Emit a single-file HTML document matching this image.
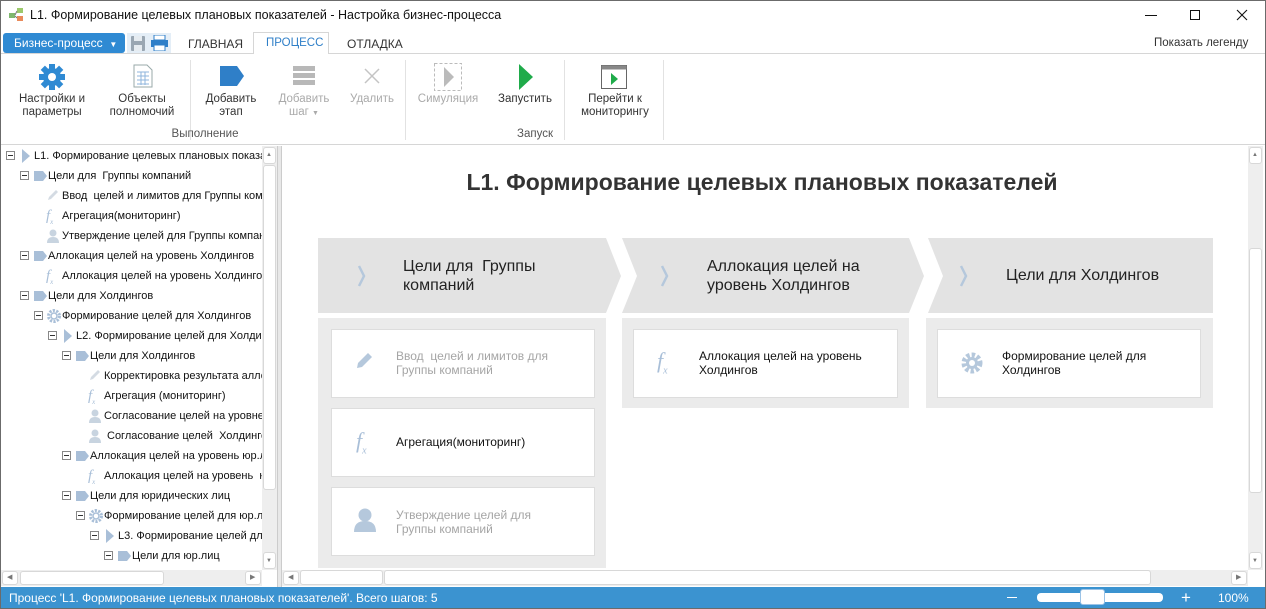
<!DOCTYPE html>
<html><head><meta charset="utf-8">
<style>
*{margin:0;padding:0;box-sizing:border-box}
body{width:1266px;height:609px;overflow:hidden;background:#fff;font-family:"Liberation Sans","DejaVu Sans",sans-serif;font-size:12px;color:#222;position:relative}
.a{position:absolute;white-space:nowrap}
.win{position:absolute;left:0;top:0;width:1266px;height:609px;border:1px solid #6b6b6b}
.rb{position:absolute;text-align:center;font-size:11.5px;line-height:13px;color:#333}
.dis{color:#aaa}
.sep{position:absolute;top:60px;width:1px;height:80px;background:#e2e2e2}
.tr{position:absolute;height:20px;line-height:20px;font-size:11px;white-space:nowrap;color:#111}
.bx{position:absolute;width:9px;height:9px;border:1px solid #888;background:#fff;top:5px}
.bx:after{content:"";position:absolute;left:1px;top:3px;width:5px;height:1px;background:#333}
.ic{position:absolute;top:2px}
.card{position:absolute;background:#fff;border:1px solid #ddd}
.ct{position:absolute;font-size:12px;line-height:14px}
.hd{position:absolute;font-size:16px;line-height:19px;color:#222}
.pan{position:absolute;background:#ebebeb}
.sb{position:absolute;background:#fff;border:1px solid #d8d8d8;border-radius:3px}
</style></head><body>
<div class="win"></div>
<svg class="a" style="left:9px;top:8px" width="16" height="14"><rect x="0" y="5" width="6" height="5" fill="#7fb86e"/><rect x="8" y="0" width="6" height="5" fill="#9cc96b"/><rect x="8" y="8" width="6" height="5" fill="#e98a5a"/><path d="M6 7 L8 3 M6 8 L8 10" stroke="#777"/></svg>
<div class="a" style="left:30px;top:8px;font-size:12.5px;color:#111">L1. Формирование целевых плановых показателей - Настройка бизнес-процесса</div>
<div class="a" style="left:1145px;top:15px;width:12px;height:1px;background:#111"></div>
<div class="a" style="left:1190px;top:10px;width:10px;height:10px;border:1px solid #111"></div>
<svg class="a" style="left:1236px;top:9px" width="12" height="12"><path d="M1 1L11 11M11 1L1 11" stroke="#111" stroke-width="1.1"/></svg>
<div class="a" style="left:3px;top:33px;width:122px;height:20px;background:#2f8ad3;border-radius:3px;color:#fff;font-size:12px;line-height:20px;padding-left:11px">Бизнес-процесс&nbsp;&nbsp;<span style="font-size:8px">▼</span></div>
<div class="a" style="left:127px;top:33px;width:44px;height:20px;background:#e4eef7"></div>
<svg class="a" style="left:131px;top:36px" width="14" height="15"><rect x="0" y="0" width="14" height="15" fill="#9aa7b3" rx="1"/><rect x="3" y="0" width="8" height="5" fill="#e6ecf1"/><rect x="3" y="9" width="8" height="6" fill="#e6ecf1"/></svg>
<svg class="a" style="left:151px;top:35px" width="17" height="16"><rect x="3" y="0" width="11" height="5" fill="#fff" stroke="#2f7fc8"/><rect x="0" y="5" width="17" height="7" fill="#2f7fc8"/><rect x="3" y="10" width="11" height="6" fill="#fff" stroke="#2f7fc8"/></svg>
<div class="a" style="left:188px;top:37px;font-size:12px;color:#333">ГЛАВНАЯ</div>
<div class="a" style="left:253px;top:32px;width:76px;height:22px;border:1px solid #d6d6d6;border-bottom:none;background:#fff"></div>
<div class="a" style="left:266px;top:37px;font-size:11.5px;color:#2f7fc8">ПРОЦЕСС</div>
<div class="a" style="left:347px;top:37px;font-size:12px;color:#333">ОТЛАДКА</div>
<div class="a" style="left:1154px;top:37px;font-size:11.5px;color:#333">Показать легенду</div>
<div class="a" style="left:1px;top:53px;width:252px;height:1px;background:#d6d6d6"></div>
<div class="a" style="left:329px;top:53px;width:936px;height:1px;background:#d6d6d6"></div>
<svg class="a" style="left:38px;top:63px" width="28" height="28" viewBox="0 0 28 28"><g fill="#2f8ad3"><circle cx="14" cy="14" r="9"/><rect x="11" y="1" width="6" height="6"/><rect x="11" y="21" width="6" height="6"/><rect x="1" y="11" width="6" height="6"/><rect x="21" y="11" width="6" height="6"/><g transform="rotate(45 14 14)"><rect x="11" y="1" width="6" height="6"/><rect x="11" y="21" width="6" height="6"/><rect x="1" y="11" width="6" height="6"/><rect x="21" y="11" width="6" height="6"/></g></g><circle cx="14" cy="14" r="4" fill="#fff"/></svg>
<svg class="a" style="left:133px;top:64px" width="20" height="24"><path d="M1 1H14L19 6V23H1Z" fill="#fff" stroke="#9aa"/><g stroke="#8fb6dc"><path d="M4 8H16M4 12H16M4 16H16M4 20H16M8 8V21M12 8V21"/></g></svg>
<svg class="a" style="left:220px;top:66px" width="24" height="20"><path d="M0 0H17L24 10L17 20H0Z" fill="#2f7fc8"/></svg>
<svg class="a" style="left:293px;top:66px" width="22" height="20"><g fill="#b8b8b8"><rect y="0" width="22" height="5"/><rect y="7" width="22" height="5"/><rect y="14" width="22" height="5"/></g></svg>
<svg class="a" style="left:363px;top:67px" width="18" height="18"><path d="M2 2L16 16M16 2L2 16" stroke="#c4c4c4" stroke-width="1.5"/></svg>
<svg class="a" style="left:434px;top:63px" width="28" height="28"><rect x="0.5" y="0.5" width="27" height="27" fill="none" stroke="#bbb" stroke-dasharray="3 2"/><path d="M10 4L20 14L10 24Z" fill="#bbb"/></svg>
<svg class="a" style="left:518px;top:64px" width="16" height="26"><path d="M1 0L15 13L1 26Z" fill="#1fab4a"/></svg>
<svg class="a" style="left:601px;top:65px" width="26" height="24"><rect x="0.5" y="0.5" width="25" height="23" fill="#fff" stroke="#666"/><rect x="0.5" y="0.5" width="25" height="4" fill="#888"/><path d="M10 8L17 14L10 20Z" fill="#1fab4a"/></svg>
<div class="rb" style="left:12px;top:93px;width:80px">Настройки и<br>параметры</div>
<div class="rb" style="left:102px;top:93px;width:80px">Объекты<br>полномочий</div>
<div class="sep" style="left:190px"></div>
<div class="rb" style="left:197px;top:93px;width:68px">Добавить<br>этап</div>
<div class="rb dis" style="left:270px;top:93px;width:68px">Добавить<br>шаг <span style="font-size:7px">▼</span></div>
<div class="rb dis" style="left:340px;top:93px;width:64px">Удалить</div>
<div class="rb" style="left:150px;top:128px;width:110px;color:#555">Выполнение</div>
<div class="sep" style="left:405px"></div>
<div class="rb dis" style="left:410px;top:93px;width:76px">Симуляция</div>
<div class="rb" style="left:490px;top:93px;width:70px">Запустить</div>
<div class="sep" style="left:564px"></div>
<div class="rb" style="left:568px;top:93px;width:94px">Перейти к<br>мониторингу</div>
<div class="rb" style="left:490px;top:128px;width:90px;color:#555">Запуск</div>
<div class="sep" style="left:663px"></div>
<div class="a" style="left:1px;top:144px;width:1264px;height:1px;background:#d6d6d6"></div>

<div style="position:absolute;left:1px;top:146px;width:261px;height:424px;overflow:hidden">
<div class="tr" style="top:0"><div class="bx" style="left:5px"></div><svg class="ic" style="left:19px" width="12" height="16"><path d="M2 1L10 8L2 15Z" fill="#a9bfd8"/></svg><span class="a" style="left:33px">L1. Формирование целевых плановых показателей</span></div>
<div class="tr" style="top:20px"><div class="bx" style="left:19px"></div><svg class="ic" style="left:33px;top:5px" width="14" height="10"><path d="M0 0H9L13 5L9 10H0Z" fill="#a9bfd8"/></svg><span class="a" style="left:47px">Цели для&nbsp; Группы компаний</span></div>
<div class="tr" style="top:40px"><svg class="ic" style="left:45px" width="14" height="14"><path d="M2 12L3 9L10 2L12 4L5 11Z" fill="#d4dbe3"/></svg><span class="a" style="left:61px">Ввод&nbsp; целей и лимитов для Группы компаний</span></div>
<div class="tr" style="top:60px"><span class="a" style="left:45px;font-family:'Liberation Serif',serif;font-style:italic;color:#a9bfd8;font-size:15px">f<sub style="font-size:7px">x</sub></span><span class="a" style="left:61px">Агрегация(мониторинг)</span></div>
<div class="tr" style="top:80px"><svg class="ic" style="left:45px" width="14" height="16"><circle cx="7" cy="5" r="3.5" fill="#c8d4e0"/><path d="M1 15Q1 9 7 9Q13 9 13 15Z" fill="#c8d4e0"/></svg><span class="a" style="left:61px">Утверждение целей для Группы компаний</span></div>
<div class="tr" style="top:100px"><div class="bx" style="left:19px"></div><svg class="ic" style="left:33px;top:5px" width="14" height="10"><path d="M0 0H9L13 5L9 10H0Z" fill="#a9bfd8"/></svg><span class="a" style="left:47px">Аллокация целей на уровень Холдингов</span></div>
<div class="tr" style="top:120px"><span class="a" style="left:45px;font-family:'Liberation Serif',serif;font-style:italic;color:#a9bfd8;font-size:15px">f<sub style="font-size:7px">x</sub></span><span class="a" style="left:61px">Аллокация целей на уровень Холдингов</span></div>
<div class="tr" style="top:140px"><div class="bx" style="left:19px"></div><svg class="ic" style="left:33px;top:5px" width="14" height="10"><path d="M0 0H9L13 5L9 10H0Z" fill="#a9bfd8"/></svg><span class="a" style="left:47px">Цели для Холдингов</span></div>
<div class="tr" style="top:160px"><div class="bx" style="left:33px"></div><svg class="ic" style="left:45px" width="16" height="16"><circle cx="8" cy="8" r="5.5" fill="none" stroke="#a9bfd8" stroke-width="3" stroke-dasharray="2.2 1.3"/><circle cx="8" cy="8" r="3" fill="none" stroke="#a9bfd8" stroke-width="1.5"/></svg><span class="a" style="left:61px">Формирование целей для Холдингов</span></div>
<div class="tr" style="top:180px"><div class="bx" style="left:47px"></div><svg class="ic" style="left:61px" width="12" height="16"><path d="M2 1L10 8L2 15Z" fill="#a9bfd8"/></svg><span class="a" style="left:75px">L2. Формирование целей для Холдингов</span></div>
<div class="tr" style="top:200px"><div class="bx" style="left:61px"></div><svg class="ic" style="left:75px;top:5px" width="14" height="10"><path d="M0 0H9L13 5L9 10H0Z" fill="#a9bfd8"/></svg><span class="a" style="left:89px">Цели для Холдингов</span></div>
<div class="tr" style="top:220px"><svg class="ic" style="left:87px" width="14" height="14"><path d="M2 12L3 9L10 2L12 4L5 11Z" fill="#d4dbe3"/></svg><span class="a" style="left:103px">Корректировка результата аллокации</span></div>
<div class="tr" style="top:240px"><span class="a" style="left:87px;font-family:'Liberation Serif',serif;font-style:italic;color:#a9bfd8;font-size:15px">f<sub style="font-size:7px">x</sub></span><span class="a" style="left:103px">Агрегация (мониторинг)</span></div>
<div class="tr" style="top:260px"><svg class="ic" style="left:87px" width="14" height="16"><circle cx="7" cy="5" r="3.5" fill="#c8d4e0"/><path d="M1 15Q1 9 7 9Q13 9 13 15Z" fill="#c8d4e0"/></svg><span class="a" style="left:103px">Согласование целей на уровне Холдингов</span></div>
<div class="tr" style="top:280px"><svg class="ic" style="left:87px" width="14" height="16"><circle cx="7" cy="5" r="3.5" fill="#c8d4e0"/><path d="M1 15Q1 9 7 9Q13 9 13 15Z" fill="#c8d4e0"/></svg><span class="a" style="left:106px">Согласование целей&nbsp; Холдингов</span></div>
<div class="tr" style="top:300px"><div class="bx" style="left:61px"></div><svg class="ic" style="left:75px;top:5px" width="14" height="10"><path d="M0 0H9L13 5L9 10H0Z" fill="#a9bfd8"/></svg><span class="a" style="left:89px">Аллокация целей на уровень юр.лиц</span></div>
<div class="tr" style="top:320px"><span class="a" style="left:87px;font-family:'Liberation Serif',serif;font-style:italic;color:#a9bfd8;font-size:15px">f<sub style="font-size:7px">x</sub></span><span class="a" style="left:103px">Аллокация целей на уровень&nbsp; юр.лиц</span></div>
<div class="tr" style="top:340px"><div class="bx" style="left:61px"></div><svg class="ic" style="left:75px;top:5px" width="14" height="10"><path d="M0 0H9L13 5L9 10H0Z" fill="#a9bfd8"/></svg><span class="a" style="left:89px">Цели для юридических лиц</span></div>
<div class="tr" style="top:360px"><div class="bx" style="left:75px"></div><svg class="ic" style="left:87px" width="16" height="16"><circle cx="8" cy="8" r="5.5" fill="none" stroke="#a9bfd8" stroke-width="3" stroke-dasharray="2.2 1.3"/><circle cx="8" cy="8" r="3" fill="none" stroke="#a9bfd8" stroke-width="1.5"/></svg><span class="a" style="left:103px">Формирование целей для юр.лиц</span></div>
<div class="tr" style="top:380px"><div class="bx" style="left:89px"></div><svg class="ic" style="left:103px" width="12" height="16"><path d="M2 1L10 8L2 15Z" fill="#a9bfd8"/></svg><span class="a" style="left:117px">L3. Формирование целей для юр.лиц</span></div>
<div class="tr" style="top:400px"><div class="bx" style="left:103px"></div><svg class="ic" style="left:117px;top:5px" width="14" height="10"><path d="M0 0H9L13 5L9 10H0Z" fill="#a9bfd8"/></svg><span class="a" style="left:131px">Цели для юр.лиц</span></div>
</div>
<div class="a" style="left:262px;top:146px;width:15px;height:424px;background:#eee"></div>
<div class="sb" style="left:263px;top:147px;width:13px;height:17px"></div>
<div class="a" style="left:266px;top:152px;font-size:6px;color:#777">▲</div>
<div class="sb" style="left:263px;top:165px;width:13px;height:325px"></div>
<div class="sb" style="left:263px;top:552px;width:13px;height:17px"></div>
<div class="a" style="left:266px;top:558px;font-size:6px;color:#777">▼</div>
<div class="a" style="left:1px;top:570px;width:261px;height:16px;background:#eee"></div>
<div class="sb" style="left:2px;top:571px;width:16px;height:14px"></div>
<div class="sb" style="left:20px;top:571px;width:144px;height:14px"></div>
<div class="sb" style="left:245px;top:571px;width:16px;height:14px"></div>
<div class="a" style="left:7px;top:573px;font-size:7px;color:#777">◀</div>
<div class="a" style="left:250px;top:573px;font-size:7px;color:#777">▶</div>
<div class="a" style="left:277px;top:146px;width:5px;height:441px;background:#e8e8e8;border-left:1px solid #ccc;border-right:1px solid #ccc"></div>

<div class="a" style="left:272px;top:169px;width:980px;text-align:center;font-size:23px;font-weight:bold;color:#333">L1. Формирование целевых плановых показателей</div>
<svg class="a" style="left:318px;top:238px" width="900" height="76"><g fill="#e3e3e3"><path d="M0 0H288L303 38L288 75H0Z"/><path d="M304 0H591L606 38L591 75H304L319 38Z"/><path d="M610 0H895V75H610L625 38Z"/></g><g fill="none" stroke="#b5c8dc" stroke-width="2.5"><path d="M41 28L46 38L41 48"/><path d="M344 28L349 38L344 48"/><path d="M643 28L648 38L643 48"/></g></svg>
<div class="hd" style="left:403px;top:257px">Цели для&nbsp; Группы<br>компаний</div>
<div class="hd" style="left:707px;top:257px">Аллокация целей на<br>уровень Холдингов</div>
<div class="hd" style="left:1006px;top:266px">Цели для Холдингов</div>
<div class="pan" style="left:318px;top:318px;width:288px;height:250px"></div>
<div class="pan" style="left:622px;top:318px;width:287px;height:90px"></div>
<div class="pan" style="left:926px;top:318px;width:287px;height:90px"></div>
<div class="card" style="left:331px;top:329px;width:264px;height:69px"></div>
<div class="card" style="left:331px;top:408px;width:264px;height:69px"></div>
<div class="card" style="left:331px;top:487px;width:264px;height:69px"></div>
<div class="card" style="left:633px;top:329px;width:265px;height:69px"></div>
<div class="card" style="left:937px;top:329px;width:264px;height:69px"></div>
<svg class="a" style="left:355px;top:350px" width="20" height="20"><path d="M2 18L3 13L13 3L17 7L7 17Z" fill="#b5c8dc"/></svg>
<div class="ct" style="left:396px;top:349px;color:#a5a5a5">Ввод&nbsp; целей и лимитов для<br>Группы компаний</div>
<span class="a" style="left:356px;top:428px;font-family:'Liberation Serif',serif;font-style:italic;color:#a9bfd8;font-size:22px">f<sub style="font-size:10px">x</sub></span>
<div class="ct" style="left:396px;top:435px;color:#111">Агрегация(мониторинг)</div>
<svg class="a" style="left:353px;top:507px" width="24" height="26"><circle cx="12" cy="8" r="6.5" fill="#b5c8dc"/><path d="M1 25Q1 14 12 14Q23 14 23 25Z" fill="#b5c8dc"/></svg>
<div class="ct" style="left:396px;top:508px;color:#a5a5a5">Утверждение целей для<br>Группы компаний</div>
<span class="a" style="left:657px;top:348px;font-family:'Liberation Serif',serif;font-style:italic;color:#a9bfd8;font-size:22px">f<sub style="font-size:10px">x</sub></span>
<div class="ct" style="left:699px;top:349px;color:#111">Аллокация целей на уровень<br>Холдингов</div>
<svg class="a" style="left:960px;top:351px" width="24" height="24"><circle cx="12" cy="12" r="8" fill="none" stroke="#b5c8dc" stroke-width="5" stroke-dasharray="3.3 2"/><circle cx="12" cy="12" r="6" fill="#b5c8dc"/><circle cx="12" cy="12" r="3" fill="#fff"/></svg>
<div class="ct" style="left:1002px;top:349px;color:#111">Формирование целей для<br>Холдингов</div>
<div class="a" style="left:1248px;top:146px;width:15px;height:424px;background:#eee"></div>
<div class="sb" style="left:1249px;top:147px;width:13px;height:17px"></div>
<div class="a" style="left:1252px;top:152px;font-size:6px;color:#777">▲</div>
<div class="sb" style="left:1249px;top:248px;width:13px;height:245px"></div>
<div class="sb" style="left:1249px;top:552px;width:13px;height:17px"></div>
<div class="a" style="left:1252px;top:558px;font-size:6px;color:#777">▼</div>
<div class="a" style="left:282px;top:570px;width:966px;height:16px;background:#eee"></div>
<div class="sb" style="left:283px;top:571px;width:16px;height:14px"></div>
<div class="sb" style="left:300px;top:570px;width:83px;height:15px"></div>
<div class="sb" style="left:384px;top:570px;width:767px;height:15px"></div>
<div class="sb" style="left:1231px;top:571px;width:16px;height:14px"></div>
<div class="a" style="left:288px;top:573px;font-size:7px;color:#777">◀</div>
<div class="a" style="left:1236px;top:573px;font-size:7px;color:#777">▶</div>
<div class="a" style="left:1px;top:587px;width:1264px;height:21px;background:#3b93d0"></div>
<div class="a" style="left:9px;top:591px;color:#fff;font-size:12px">Процесс 'L1. Формирование целевых плановых показателей'. Всего шагов: 5</div>
<div class="a" style="left:1007px;top:597px;width:10px;height:1px;background:#fff"></div>
<div class="a" style="left:1037px;top:593px;width:126px;height:9px;background:#fff;border-radius:4px"></div>
<div class="a" style="left:1080px;top:589px;width:25px;height:16px;background:#fff;border:1px solid #9cc3e6;border-radius:3px"></div>
<div class="a" style="left:1181px;top:588px;color:#fff;font-size:17px">+</div>
<div class="a" style="left:1218px;top:591px;color:#fff;font-size:12px">100%</div>
</body></html>
